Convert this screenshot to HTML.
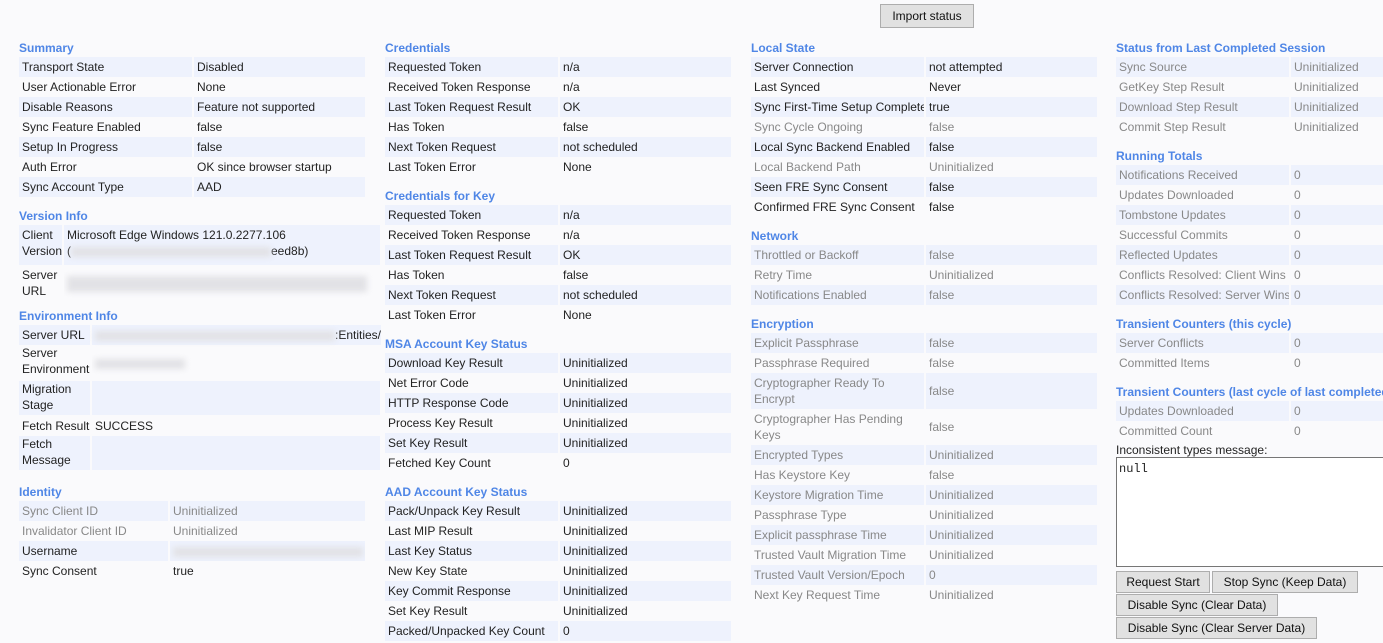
<!DOCTYPE html>
<html><head><meta charset="utf-8"><style>
body{margin:0;width:1383px;height:643px;background:#fafafc;font-family:"Liberation Sans",sans-serif;font-size:12px;color:#222;position:relative;overflow:hidden}
h3{position:absolute;margin:0;font-size:12px;font-weight:bold;color:#4f86e6;white-space:nowrap}
.t{position:absolute;width:346px}
.r{display:flex;height:20px;line-height:20px;margin-bottom:0}
.r span{display:block;padding-left:3px;white-space:nowrap;overflow:hidden}
.r .l{margin-right:2px;box-sizing:border-box;flex-shrink:0}
.r .v{flex:1}
.s span{background:#eef2fd}
.g span{color:#888}
.r2{height:40px;line-height:16px}
.r2 span{display:flex;flex-direction:column;justify-content:center}
.blur{display:inline-block;height:10px;background:#e2e2e6;filter:blur(3px);vertical-align:middle}
button{position:absolute;font-family:"Liberation Sans",sans-serif;font-size:12px;background:#e1e1e1;border:1px solid #adadad;padding:0;height:22px;color:#111}
</style></head><body>
<button style="left:880px;top:4px;width:94px;height:24px">Import status</button>

<h3 style="left:19px;top:41px">Summary</h3>
<div class="t" style="left:19px;top:57px">
<div class="r s"><span class="l" style="width:173px">Transport State</span><span class="v">Disabled</span></div>
<div class="r"><span class="l" style="width:173px">User Actionable Error</span><span class="v">None</span></div>
<div class="r s"><span class="l" style="width:173px">Disable Reasons</span><span class="v">Feature not supported</span></div>
<div class="r"><span class="l" style="width:173px">Sync Feature Enabled</span><span class="v">false</span></div>
<div class="r s"><span class="l" style="width:173px">Setup In Progress</span><span class="v">false</span></div>
<div class="r"><span class="l" style="width:173px">Auth Error</span><span class="v">OK since browser startup</span></div>
<div class="r s"><span class="l" style="width:173px">Sync Account Type</span><span class="v">AAD</span></div>
</div>

<h3 style="left:19px;top:209px">Version Info</h3>
<div class="t" style="left:19px;top:225px;width:361px">
<div class="r r2 s"><span class="l" style="width:43px;display:block;padding-top:2px">Client<br>Version</span><span class="v" style="display:block;padding-top:2px">Microsoft Edge Windows 121.0.2277.106<br>(<i class="blur" style="width:200px"></i>eed8b)</span></div>
<div class="r r2"><span class="l" style="width:43px;display:block;padding-top:2px">Server<br>URL</span><span class="v" style="display:block;padding-top:10px"><i class="blur" style="width:300px;height:16px"></i></span></div>
</div>

<h3 style="left:19px;top:309px">Environment Info</h3>
<div class="t" style="left:19px;top:325px;width:361px">
<div class="r s"><span class="l" style="width:71px">Server URL</span><span class="v" style="overflow:visible"><i class="blur" style="width:240px"></i>:Entities/</span></div>
<div class="r r2" style="height:36px"><span class="l" style="width:71px;display:block">Server<br>Environment</span><span class="v" style="display:block;padding-top:10px"><i class="blur" style="width:90px"></i></span></div>
<div class="r r2 s" style="height:34px"><span class="l" style="width:71px;display:block">Migration<br>Stage</span><span class="v"></span></div>
<div class="r" style="margin-top:1px"><span class="l" style="width:71px">Fetch Result</span><span class="v">SUCCESS</span></div>
<div class="r r2 s" style="height:34px"><span class="l" style="width:71px;display:block">Fetch<br>Message</span><span class="v"></span></div>
</div>

<h3 style="left:19px;top:485px">Identity</h3>
<div class="t" style="left:19px;top:501px">
<div class="r s g"><span class="l" style="width:149px">Sync Client ID</span><span class="v">Uninitialized</span></div>
<div class="r g"><span class="l" style="width:149px">Invalidator Client ID</span><span class="v">Uninitialized</span></div>
<div class="r s"><span class="l" style="width:149px">Username</span><span class="v"><i class="blur" style="width:190px"></i></span></div>
<div class="r"><span class="l" style="width:149px">Sync Consent</span><span class="v">true</span></div>
</div>

<h3 style="left:385px;top:41px">Credentials</h3>
<div class="t" style="left:385px;top:57px">
<div class="r s"><span class="l" style="width:173px">Requested Token</span><span class="v">n/a</span></div>
<div class="r"><span class="l" style="width:173px">Received Token Response</span><span class="v">n/a</span></div>
<div class="r s"><span class="l" style="width:173px">Last Token Request Result</span><span class="v">OK</span></div>
<div class="r"><span class="l" style="width:173px">Has Token</span><span class="v">false</span></div>
<div class="r s"><span class="l" style="width:173px">Next Token Request</span><span class="v">not scheduled</span></div>
<div class="r"><span class="l" style="width:173px">Last Token Error</span><span class="v">None</span></div>
</div>

<h3 style="left:385px;top:189px">Credentials for Key</h3>
<div class="t" style="left:385px;top:205px">
<div class="r s"><span class="l" style="width:173px">Requested Token</span><span class="v">n/a</span></div>
<div class="r"><span class="l" style="width:173px">Received Token Response</span><span class="v">n/a</span></div>
<div class="r s"><span class="l" style="width:173px">Last Token Request Result</span><span class="v">OK</span></div>
<div class="r"><span class="l" style="width:173px">Has Token</span><span class="v">false</span></div>
<div class="r s"><span class="l" style="width:173px">Next Token Request</span><span class="v">not scheduled</span></div>
<div class="r"><span class="l" style="width:173px">Last Token Error</span><span class="v">None</span></div>
</div>

<h3 style="left:385px;top:337px">MSA Account Key Status</h3>
<div class="t" style="left:385px;top:353px">
<div class="r s"><span class="l" style="width:173px">Download Key Result</span><span class="v">Uninitialized</span></div>
<div class="r"><span class="l" style="width:173px">Net Error Code</span><span class="v">Uninitialized</span></div>
<div class="r s"><span class="l" style="width:173px">HTTP Response Code</span><span class="v">Uninitialized</span></div>
<div class="r"><span class="l" style="width:173px">Process Key Result</span><span class="v">Uninitialized</span></div>
<div class="r s"><span class="l" style="width:173px">Set Key Result</span><span class="v">Uninitialized</span></div>
<div class="r"><span class="l" style="width:173px">Fetched Key Count</span><span class="v">0</span></div>
</div>

<h3 style="left:385px;top:485px">AAD Account Key Status</h3>
<div class="t" style="left:385px;top:501px">
<div class="r s"><span class="l" style="width:173px">Pack/Unpack Key Result</span><span class="v">Uninitialized</span></div>
<div class="r"><span class="l" style="width:173px">Last MIP Result</span><span class="v">Uninitialized</span></div>
<div class="r s"><span class="l" style="width:173px">Last Key Status</span><span class="v">Uninitialized</span></div>
<div class="r"><span class="l" style="width:173px">New Key State</span><span class="v">Uninitialized</span></div>
<div class="r s"><span class="l" style="width:173px">Key Commit Response</span><span class="v">Uninitialized</span></div>
<div class="r"><span class="l" style="width:173px">Set Key Result</span><span class="v">Uninitialized</span></div>
<div class="r s"><span class="l" style="width:173px">Packed/Unpacked Key Count</span><span class="v">0</span></div>
</div>

<h3 style="left:751px;top:41px">Local State</h3>
<div class="t" style="left:751px;top:57px">
<div class="r s"><span class="l" style="width:173px">Server Connection</span><span class="v">not attempted</span></div>
<div class="r"><span class="l" style="width:173px">Last Synced</span><span class="v">Never</span></div>
<div class="r s"><span class="l" style="width:173px">Sync First-Time Setup Complete</span><span class="v">true</span></div>
<div class="r g"><span class="l" style="width:173px">Sync Cycle Ongoing</span><span class="v">false</span></div>
<div class="r s"><span class="l" style="width:173px">Local Sync Backend Enabled</span><span class="v">false</span></div>
<div class="r g"><span class="l" style="width:173px">Local Backend Path</span><span class="v">Uninitialized</span></div>
<div class="r s"><span class="l" style="width:173px">Seen FRE Sync Consent</span><span class="v">false</span></div>
<div class="r"><span class="l" style="width:173px">Confirmed FRE Sync Consent</span><span class="v">false</span></div>
</div>

<h3 style="left:751px;top:229px">Network</h3>
<div class="t" style="left:751px;top:245px">
<div class="r s g"><span class="l" style="width:173px">Throttled or Backoff</span><span class="v">false</span></div>
<div class="r g"><span class="l" style="width:173px">Retry Time</span><span class="v">Uninitialized</span></div>
<div class="r s g"><span class="l" style="width:173px">Notifications Enabled</span><span class="v">false</span></div>
</div>

<h3 style="left:751px;top:317px">Encryption</h3>
<div class="t" style="left:751px;top:333px">
<div class="r s g"><span class="l" style="width:173px">Explicit Passphrase</span><span class="v">false</span></div>
<div class="r g"><span class="l" style="width:173px">Passphrase Required</span><span class="v">false</span></div>
<div class="r r2 s g" style="height:36px"><span class="l" style="width:173px">Cryptographer Ready To<br>Encrypt</span><span class="v">false</span></div>
<div class="r r2 g" style="height:36px"><span class="l" style="width:173px">Cryptographer Has Pending<br>Keys</span><span class="v">false</span></div>
<div class="r s g"><span class="l" style="width:173px">Encrypted Types</span><span class="v">Uninitialized</span></div>
<div class="r g"><span class="l" style="width:173px">Has Keystore Key</span><span class="v">false</span></div>
<div class="r s g"><span class="l" style="width:173px">Keystore Migration Time</span><span class="v">Uninitialized</span></div>
<div class="r g"><span class="l" style="width:173px">Passphrase Type</span><span class="v">Uninitialized</span></div>
<div class="r s g"><span class="l" style="width:173px">Explicit passphrase Time</span><span class="v">Uninitialized</span></div>
<div class="r g"><span class="l" style="width:173px">Trusted Vault Migration Time</span><span class="v">Uninitialized</span></div>
<div class="r s g"><span class="l" style="width:173px">Trusted Vault Version/Epoch</span><span class="v">0</span></div>
<div class="r g"><span class="l" style="width:173px">Next Key Request Time</span><span class="v">Uninitialized</span></div>
</div>

<h3 style="left:1116px;top:41px">Status from Last Completed Session</h3>
<div class="t" style="left:1116px;top:57px;width:267px">
<div class="r s g"><span class="l" style="width:173px">Sync Source</span><span class="v">Uninitialized</span></div>
<div class="r g"><span class="l" style="width:173px">GetKey Step Result</span><span class="v">Uninitialized</span></div>
<div class="r s g"><span class="l" style="width:173px">Download Step Result</span><span class="v">Uninitialized</span></div>
<div class="r g"><span class="l" style="width:173px">Commit Step Result</span><span class="v">Uninitialized</span></div>
</div>

<h3 style="left:1116px;top:149px">Running Totals</h3>
<div class="t" style="left:1116px;top:165px;width:267px">
<div class="r s g"><span class="l" style="width:173px">Notifications Received</span><span class="v">0</span></div>
<div class="r g"><span class="l" style="width:173px">Updates Downloaded</span><span class="v">0</span></div>
<div class="r s g"><span class="l" style="width:173px">Tombstone Updates</span><span class="v">0</span></div>
<div class="r g"><span class="l" style="width:173px">Successful Commits</span><span class="v">0</span></div>
<div class="r s g"><span class="l" style="width:173px">Reflected Updates</span><span class="v">0</span></div>
<div class="r g"><span class="l" style="width:173px">Conflicts Resolved: Client Wins</span><span class="v">0</span></div>
<div class="r s g"><span class="l" style="width:173px">Conflicts Resolved: Server Wins</span><span class="v">0</span></div>
</div>

<h3 style="left:1116px;top:317px">Transient Counters (this cycle)</h3>
<div class="t" style="left:1116px;top:333px;width:267px">
<div class="r s g"><span class="l" style="width:173px">Server Conflicts</span><span class="v">0</span></div>
<div class="r g"><span class="l" style="width:173px">Committed Items</span><span class="v">0</span></div>
</div>

<h3 style="left:1116px;top:385px">Transient Counters (last cycle of last completed</h3>
<div class="t" style="left:1116px;top:401px;width:267px">
<div class="r s g"><span class="l" style="width:173px">Updates Downloaded</span><span class="v">0</span></div>
<div class="r g"><span class="l" style="width:173px">Committed Count</span><span class="v">0</span></div>
</div>

<div style="position:absolute;left:1116px;top:443px">Inconsistent types message:</div>
<div style="position:absolute;left:1116px;top:457px;width:280px;height:110px;background:#fff;border:1px solid #767676;font-family:'Liberation Mono',monospace;font-size:12px;padding:4px 2px;box-sizing:border-box">null</div>
<button style="left:1116px;top:571px;width:94px">Request Start</button>
<button style="left:1212px;top:571px;width:146px">Stop Sync (Keep Data)</button>
<button style="left:1116px;top:594px;width:162px">Disable Sync (Clear Data)</button>
<button style="left:1116px;top:617px;width:201px">Disable Sync (Clear Server Data)</button>
</body></html>
